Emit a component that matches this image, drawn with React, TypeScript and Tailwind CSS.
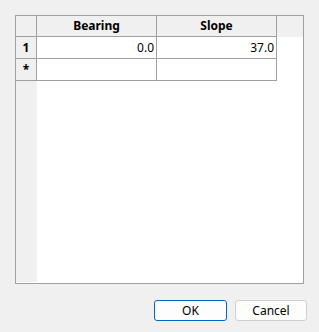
import React from "react";

const rows = [
  { head: "1", bearing: "0.0", slope: "37.0" },
  { head: "*", bearing: "", slope: "" },
];

const App = () => {
  return (
    <div
      className="w-[319px] h-[332px] bg-[#f0f0f0] flex flex-col text-[12px] text-black"
      style={{ fontFamily: '"Noto Sans", "Open Sans", sans-serif' }}
    >
      <div className="ml-[15px] mt-[15px] w-[289px] h-[269px] border border-[#a0a0a0] bg-white flex flex-col">
        {/* header row */}
        <div className="flex h-[21px] bg-[#f0f0f0]">
          <div className="w-[21px] border-r border-b border-[#a0a0a0]" />
          <div className="w-[120px] border-r border-b border-[#a0a0a0] flex items-center justify-center font-bold">
            Bearing
          </div>
          <div className="w-[120px] border-r border-b border-[#a0a0a0] flex items-center justify-center font-bold">
            Slope
          </div>
          <div className="flex-1" />
        </div>
        {rows.map((r) => (
          <div key={r.head} className="flex h-[22px]">
            <div className="w-[21px] bg-[#f0f0f0] border-r border-b border-[#a0a0a0] flex items-center justify-center font-bold">
              {r.head}
            </div>
            <div className="w-[120px] border-r border-b border-[#a0a0a0] flex items-center justify-end pr-[2px]">
              {r.bearing}
            </div>
            <div className="w-[120px] border-r border-b border-[#a0a0a0] flex items-center justify-end pr-[2px]">
              {r.slope}
            </div>
            <div className="flex-1" />
          </div>
        ))}
        <div className="flex-1 flex">
          <div className="w-[21px] bg-[#f0f0f0] mb-[1px]" />
          <div className="flex-1" />
        </div>
      </div>
      <div className="flex justify-end gap-[8px] mt-[16px] mr-[12px]">
        <button className="w-[73px] h-[21px] rounded-[3px] border border-[#0067c0] bg-[#fdfdfd] flex items-center justify-center">
          OK
        </button>
        <button className="w-[72px] h-[21px] rounded-[3px] border border-[#d0d0d0] bg-[#fdfdfd] flex items-center justify-center">
          Cancel
        </button>
      </div>
    </div>
  );
};

export default App;
